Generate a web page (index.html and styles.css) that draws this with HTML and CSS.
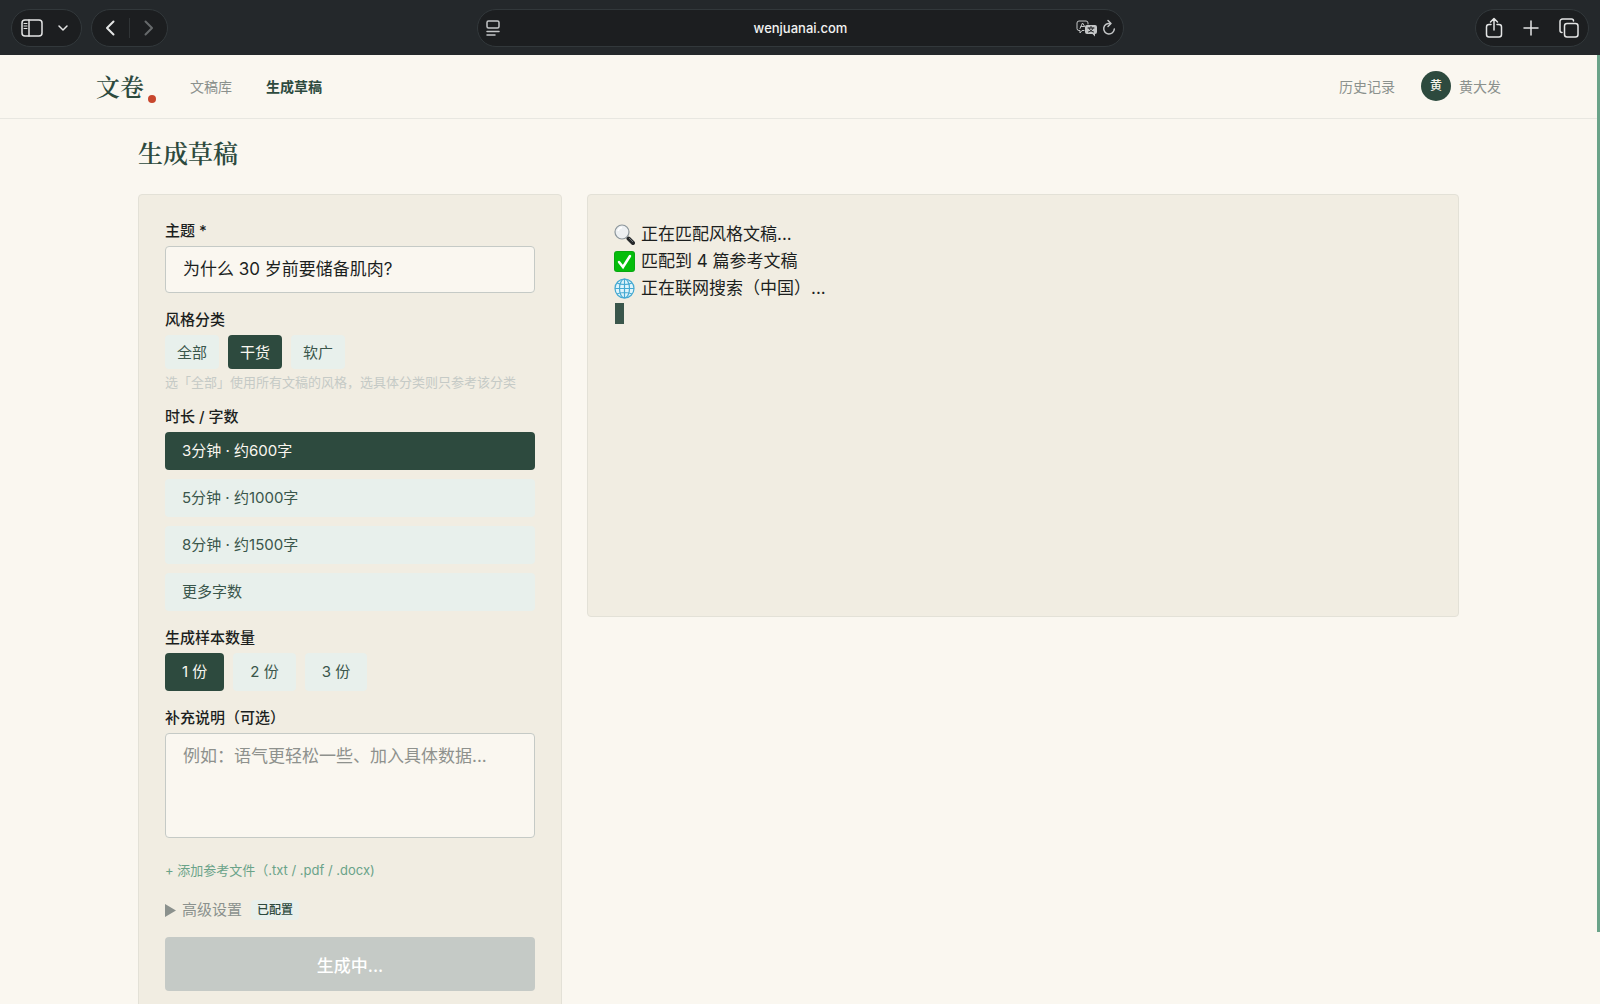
FILE: index.html
```html
<!DOCTYPE html>
<html lang="zh-CN">
  <head>
    <meta charset="UTF-8" />
    <meta name="viewport" content="width=device-width, initial-scale=1.0" />
    <title>生成草稿</title>
    <link rel="stylesheet" href="styles.css">
  </head>
  <body>
    <div class="toolbar">
      <div class="toolbar-side">
        <div class="pill">
          <button type="button" class="tool" aria-label="Sidebar">
            <svg width="22" height="18" viewBox="0 0 22 18"><rect x="1" y="1" width="20" height="16" rx="3" /><path d="M8 1v16" /><path class="thin" d="M3 4.500h3M3 7h3M3 9.500h3" /></svg>
          </button>
          <button type="button" class="tool" aria-label="Tab groups">
            <svg width="12" height="8" viewBox="0 0 12 8"><path d="M2 2l4 4 4-4" /></svg>
          </button>
        </div>
        <div class="pill pill-nav">
          <button type="button" class="tool" aria-label="Back">
            <svg width="12" height="18" viewBox="0 0 12 18"><path class="bold" d="M9.500 2.500L3 9l6.500 6.500" /></svg>
          </button>
          <span class="pill-divider"></span>
          <button type="button" class="tool" aria-label="Forward" disabled>
            <svg width="12" height="18" viewBox="0 0 12 18"><path class="bold" d="M2.500 2.500L9 9l-6.500 6.500" /></svg>
          </button>
        </div>
      </div>

      <div class="address">
        <button type="button" class="tool" aria-label="Page menu">
          <svg width="14" height="16" viewBox="0 0 14 16"><rect x="1" y="1" width="12" height="7" rx="1.500" /><path d="M1 11.500h12M1 15h8" /></svg>
        </button>
        <input type="text" class="url" value="wenjuanai.com" aria-label="Address" />
        <div class="address-tools">
          <button type="button" class="tool" aria-label="Translate">
            <svg width="22" height="20" viewBox="0 0 22 20">
              <path class="thin" d="M8 12.500H6L4 15v-2.500H3a2 2 0 0 1-2-2V5a2 2 0 0 1 2-2h7a2 2 0 0 1 2 2v1" />
              <path class="thin" d="M4 10.500l2.500-5.500L9 9M5 8.500h3" />
              <path class="solid" d="M11 7h8a2 2 0 0 1 2 2v5a2 2 0 0 1-2 2v2.500L16.500 16H11a2 2 0 0 1-2-2V9a2 2 0 0 1 2-2z" />
              <path class="dark" d="M12 10h6M15 8.500V10M17 10c-.5 2-2 3.500-4.500 4M13 10c.5 2 2 3.500 4.500 4" />
            </svg>
          </button>
          <button type="button" class="tool" aria-label="Reload">
            <svg width="14" height="20" viewBox="0 0 14 20"><path d="M8 5.500a5.300 5.300 0 1 0 4.300 5.500" /><path d="M6 2.500l3 3-3 3" /></svg>
          </button>
        </div>
      </div>

      <div class="toolbar-side toolbar-end">
        <div class="pill pill-actions">
          <button type="button" class="tool" aria-label="Share">
            <svg width="18" height="22" viewBox="0 0 18 22"><path d="M6 7.500H4a2.500 2.500 0 0 0-2.500 2.500v7.500A2.500 2.500 0 0 0 4 20h10a2.500 2.500 0 0 0 2.500-2.500V10A2.500 2.500 0 0 0 14 7.500h-2M9 13V1.500M5.500 5L9 1.500 12.500 5" /></svg>
          </button>
          <button type="button" class="tool" aria-label="New tab">
            <svg width="16" height="16" viewBox="0 0 16 16"><path d="M8 1v14M1 8h14" /></svg>
          </button>
          <button type="button" class="tool" aria-label="Tab overview">
            <svg width="20" height="20" viewBox="0 0 20 20"><rect x="5.500" y="5.500" width="13.500" height="13.500" rx="2.500" /><path d="M3 14.500a2 2 0 0 1-2-2V3.500A2.500 2.500 0 0 1 3.500 1h9a2 2 0 0 1 2 2" /></svg>
          </button>
        </div>
      </div>
    </div>

    <div class="viewport">
      <div class="page">
        <header class="header">
          <a href="#" class="logo">文卷<span class="logo-dot"></span></a>
          <nav class="nav">
            <a href="#">文稿库</a>
            <a href="#" class="active">生成草稿</a>
          </nav>
          <div class="account">
            <a href="#">历史记录</a>
            <a href="#" class="user"><span class="avatar">黄</span>黄大发</a>
          </div>
        </header>

        <main class="main">
          <h1>生成草稿</h1>
          <div class="columns">
            <form class="card form">
              <div class="field">
                <label for="topic">主题 *</label>
                <input type="text" class="input" id="topic" value="为什么 30 岁前要储备肌肉?" />
              </div>

              <div class="field" role="group" aria-labelledby="style-label">
                <span class="label" id="style-label">风格分类</span>
                <div class="options">
                  <button type="button" class="option chip">全部</button>
                  <button type="button" class="option chip selected">干货</button>
                  <button type="button" class="option chip">软广</button>
                </div>
                <p class="hint">选「全部」使用所有文稿的风格，选具体分类则只参考该分类</p>
              </div>

              <div class="field" role="group" aria-labelledby="length-label">
                <span class="label" id="length-label">时长 / 字数</span>
                <div class="options stacked">
                  <button type="button" class="option selected">3分钟 · 约600字</button>
                  <button type="button" class="option">5分钟 · 约1000字</button>
                  <button type="button" class="option">8分钟 · 约1500字</button>
                  <button type="button" class="option">更多字数</button>
                </div>
              </div>

              <div class="field" role="group" aria-labelledby="count-label">
                <span class="label" id="count-label">生成样本数量</span>
                <div class="options">
                  <button type="button" class="option selected">1 份</button>
                  <button type="button" class="option">2 份</button>
                  <button type="button" class="option">3 份</button>
                </div>
              </div>

              <div class="field">
                <label for="notes">补充说明（可选）</label>
                <textarea class="input" id="notes" placeholder="例如：语气更轻松一些、加入具体数据..."></textarea>
              </div>

              <button type="button" class="add-file">+ 添加参考文件（.txt / .pdf / .docx)</button>

              <button type="button" class="advanced">
                <svg width="11" height="13" viewBox="0 0 11 13"><path d="M0 0l11 6.500L0 13z" /></svg>
                高级设置
                <span class="badge">已配置</span>
              </button>

              <button type="submit" class="submit" disabled>生成中...</button>
            </form>

            <section class="card output">
              <p>
                <svg class="emoji" viewBox="0 0 21 21">
                  <path d="M13 13l2 2" stroke="#8a8f92" stroke-width="2" />
                  <path d="M14.500 14.500l4.500 4.500" stroke="#25282a" stroke-width="4" stroke-linecap="round" />
                  <path d="M15 14l4 4" stroke="#70777b" stroke-width="1" />
                  <circle cx="8" cy="8" r="7" fill="#edf0f2" stroke="#8b959b" stroke-width="1.200" />
                  <path d="M4 7a4.500 4.500 0 0 1 4-3.500" fill="none" stroke="#fff" stroke-width="1.500" />
                </svg>
                正在匹配风格文稿...
              </p>
              <p>
                <svg class="emoji" viewBox="0 0 21 21">
                  <rect width="21" height="21" rx="3" fill="#08a810" />
                  <rect x="1" y="1" width="19" height="19" rx="2" fill="#05bd0b" />
                  <path d="M5 11l4 5 7-11" fill="none" stroke="#fff" stroke-width="2.500" stroke-linecap="round" />
                </svg>
                匹配到 4 篇参考文稿
              </p>
              <p>
                <svg class="emoji" viewBox="0 0 21 21">
                  <circle cx="10.500" cy="10.500" r="9.500" fill="#dff4fb" />
                  <g fill="none" stroke="#44a9d2" stroke-width="1.200">
                    <circle cx="10.500" cy="10.500" r="9.500" />
                    <ellipse cx="10.500" cy="10.500" rx="5" ry="9.500" />
                    <path d="M10.500 1v19M1 10.500h19M3 5c4 2 11 2 15 0M3 16c4-2 11-2 15 0" />
                  </g>
                </svg>
                正在联网搜索（中国）...
              </p>
              <div class="cursor"></div>
            </section>
          </div>
        </main>
      </div>
      <div class="scrollbar"><div class="scrollbar-thumb"></div></div>
    </div>
  </body>
</html>
```
FILE: styles.css
```css
* {
  box-sizing: border-box;
}

body {
  margin: 0;
  height: 100vh;
  display: flex;
  flex-direction: column;
  overflow: hidden;
  background-color: #faf7f0;
  color: #1c1f1e;
  font-family: Inter, "Noto Sans CJK SC", sans-serif;
  font-size: 17px;
}

h1,
p {
  margin: 0;
}

a {
  color: inherit;
  text-decoration: none;
}

button,
input,
textarea {
  font: inherit;
  color: inherit;
}

button {
  padding: 0;
  border: none;
  background: none;
  cursor: pointer;
}

/* Browser toolbar */
.toolbar {
  flex: none;
  display: flex;
  align-items: center;
  height: 55px;
  padding: 0 11px;
  background-color: #24282b;
}

.toolbar-side {
  flex: 1;
  display: flex;
  gap: 9px;
}

.toolbar-end {
  justify-content: flex-end;
}

.pill,
.address {
  display: flex;
  align-items: center;
  height: 38px;
  border: 1px solid #32383b;
  border-radius: 19px;
  background-color: #1c1e20;
}

.pill {
  gap: 14px;
  padding: 0 12px 0 9px;
}

.pill-nav {
  gap: 13px;
  padding: 0 12px;
}

.pill-actions {
  gap: 20px;
  padding: 0 9px;
}

.pill-divider {
  width: 1px;
  height: 20px;
  background-color: #303436;
}

.tool {
  display: flex;
  color: #e4e5e5;
}

.tool:disabled {
  color: #66696b;
}

.tool svg {
  fill: none;
  stroke: currentColor;
  stroke-width: 1.5;
  stroke-linecap: round;
  stroke-linejoin: round;
}

.tool svg .bold {
  stroke-width: 2;
}

.tool svg .thin {
  stroke-width: 1;
}

.tool svg .solid {
  fill: currentColor;
  stroke: none;
}

.tool svg .dark {
  stroke: #1c1e20;
  stroke-width: 1;
}

.address {
  flex: 0 1 647px;
  justify-content: space-between;
  padding: 0 7px 0 8px;
}

.address > .tool {
  width: 40px;
}

.address .tool {
  color: #c4c6c7;
}

.url {
  flex: 1;
  min-width: 0;
  padding: 0;
  border: none;
  background: none;
  color: #f2f2f2;
  font-size: 13px;
  font-weight: 500;
  text-align: center;
}

.address-tools {
  display: flex;
  gap: 4px;
}

/* Page */
.viewport {
  flex: 1;
  min-height: 0;
  display: flex;
}

.page {
  flex: 1;
  overflow: hidden;
}

.scrollbar {
  width: 3px;
}

.scrollbar-thumb {
  height: calc(100% - 72px);
  background-color: #6aa389;
}

.header {
  display: flex;
  align-items: center;
  height: 64px;
  padding: 0 96px 2px;
  border-bottom: 1px solid #e8e7e1;
  color: #8b918d;
  font-size: 14px;
}

.logo {
  display: flex;
  align-items: center;
  gap: 4px;
  margin-right: 34px;
  color: #2d4a3e;
  font-family: "Noto Serif CJK SC", "Songti SC", "Noto Sans CJK SC", serif;
  font-size: 24px;
  font-weight: 600;
}

.logo-dot {
  width: 8px;
  height: 8px;
  margin-top: 26px;
  border-radius: 50%;
  background-color: #c8472d;
}

.nav {
  display: flex;
  gap: 34px;
}

.nav .active {
  color: #2d4a3e;
  font-weight: 600;
}

.account {
  display: flex;
  align-items: center;
  gap: 26px;
  margin-left: auto;
}

.user {
  display: flex;
  align-items: center;
  gap: 8px;
}

.avatar {
  width: 30px;
  height: 30px;
  border-radius: 50%;
  background-color: #2d4a3e;
  color: #faf7f0;
  font-size: 12px;
  font-weight: 500;
  line-height: 30px;
  text-align: center;
}

.main {
  max-width: 1321px;
  margin: 0 auto;
  padding-top: 15px;
}

h1 {
  margin-bottom: 24px;
  color: #2d4a3e;
  font-family: "Noto Serif CJK SC", "Songti SC", "Noto Sans CJK SC", serif;
  font-size: 25px;
  font-weight: 600;
  line-height: 36px;
}

.columns {
  display: grid;
  grid-template-columns: 424px 1fr;
  align-items: start;
  gap: 25px;
}

.card {
  padding: 26px;
  border: 1px solid #e3e1d7;
  border-radius: 4px;
  background-color: #f1ede2;
}

.form {
  display: flex;
  flex-direction: column;
  gap: 17px;
}

.field {
  display: flex;
  flex-direction: column;
  gap: 5px;
}

label,
.label {
  font-size: 15px;
  font-weight: 500;
  line-height: 20px;
}

.input {
  width: 100%;
  padding: 10px 17px;
  border: 1px solid #c5cac6;
  border-radius: 4px;
  background-color: #faf7f0;
  line-height: 25px;
}

textarea.input {
  display: block;
  height: 105px;
  resize: none;
}

.input::placeholder {
  color: #8e918d;
}

.options {
  display: flex;
  gap: 9px;
}

.stacked {
  flex-direction: column;
}

.option {
  height: 38px;
  padding: 0 17px 3px;
  border-radius: 4px;
  background-color: #e8f0ec;
  color: #3a564b;
  font-size: 15px;
  text-align: left;
}

.chip {
  height: 34px;
  padding: 0 12px 2px;
}

.option.selected {
  background-color: #2d4a3e;
  color: #faf7f0;
}

.hint {
  color: #c5cac6;
  font-size: 13px;
  line-height: 16px;
  white-space: nowrap;
}

.add-file {
  align-self: flex-start;
  padding: 5px 0 3px;
  color: #6aa389;
  font-size: 13px;
  line-height: 20px;
}

.advanced {
  display: flex;
  align-items: center;
  align-self: flex-start;
  gap: 6px;
  color: #8b918d;
  font-size: 15px;
  line-height: 20px;
}

.advanced svg {
  fill: currentColor;
}

.badge {
  margin-left: 3px;
  padding: 0 6px;
  border-radius: 4px;
  background-color: #e8f0ec;
  color: #2d4a3e;
  font-size: 12px;
  font-weight: 500;
}

.submit {
  height: 54px;
  border-radius: 4px;
  background-color: #c5cac6;
  color: #fff;
  font-weight: 500;
}

.output {
  min-height: 423px;
}

.output p {
  display: flex;
  align-items: center;
  gap: 6px;
  line-height: 27px;
}

.emoji {
  width: 21px;
  height: 21px;
}

.cursor {
  width: 9px;
  height: 21px;
  margin: 1px;
  background-color: #3a564b;
}
```
